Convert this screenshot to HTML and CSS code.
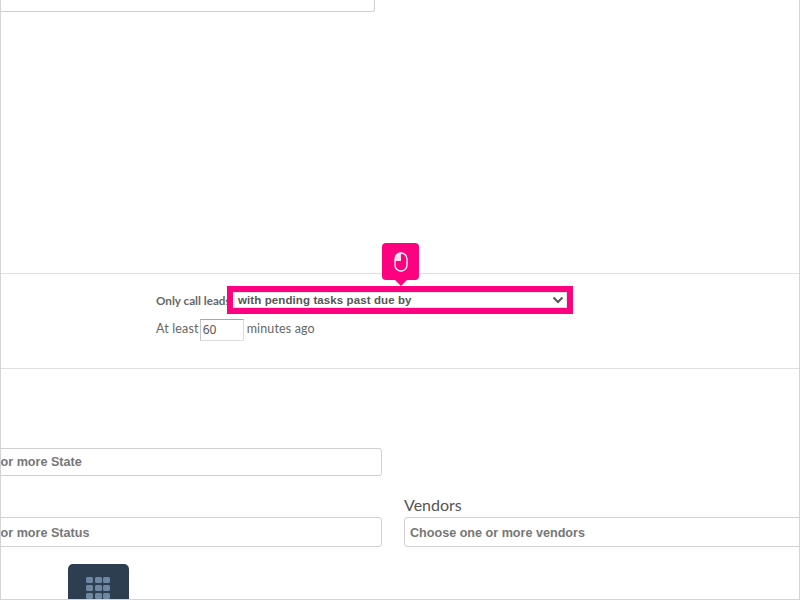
FILE: index.html
```html
<!DOCTYPE html>
<html lang="en">
<head>
<meta charset="utf-8">
<title>Call filters</title>
<link rel="stylesheet" href="styles.css">
</head>
<body>
<div class="frame">
  <section class="top">
    <div class="top-field"></div>
  </section>
  <section class="rules">
    <div class="rule-row">
      <span class="rule-label">Only call leads</span>
      <div class="select">
        <span>with pending tasks past due by</span>
        <svg class="chevron" width="12" height="8" viewBox="0 0 12 8"><path d="M1.5 1.5 6 6l4.5-4.5" fill="none" stroke="#555" stroke-width="2"/></svg>
      </div>
    </div>
    <div class="minutes-row">
      <span>At least</span>
      <div class="minutes-input">60</div>
      <span>minutes ago</span>
    </div>
    <div class="highlight"></div>
    <div class="tip">
      <svg width="14" height="20" viewBox="0 0 14 20">
        <rect x="1" y="1" width="12" height="18" rx="6" fill="none" stroke="#fff" stroke-width="1.3"/>
        <path d="M7 1A6 6 0 0 0 1 7v2h6z" fill="#fff" opacity=".85"/>
      </svg>
    </div>
  </section>
  <section class="filters">
    <div class="filter-grid">
      <div class="field"><div class="multi">Choose one or more State</div></div>
      <div class="field"></div>
      <div class="field"><div class="multi tall">Choose one or more Status</div></div>
      <div class="field vendors">
        <div class="field-label">Vendors</div>
        <div class="multi tall">Choose one or more vendors</div>
      </div>
    </div>
    <div class="app-button">
      <div class="dots">
        <i></i><i></i><i></i><i></i><i></i><i></i><i></i><i></i><i></i>
      </div>
    </div>
  </section>
</div>
</body>
</html>
```
FILE: styles.css
```css
* { box-sizing: border-box; }
html, body { margin: 0; padding: 0; background: #fff; }
.frame {
  width: 800px;
  height: 600px;
  border: 1px solid #d4d4d4;
  border-top: 0;
  overflow: hidden;
  display: flex;
  flex-direction: column;
  position: relative;
}
.top {
  height: 274px;
  flex: none;
  border-bottom: 1px solid #e0e0e0;
}
.top-field {
  width: 374px;
  height: 12px;
  border: 1px solid #d0d0d0;
  border-top: 0;
  border-left: 0;
  border-bottom-right-radius: 3px;
}
.rules {
  height: 95px;
  flex: none;
  border-bottom: 1px solid #e0e0e0;
  padding: 18px 0 0 155px;
  position: relative;
  font-family: Lato, "Noto Sans", sans-serif;
  color: #666;
}
.rule-row { display: flex; align-items: center; height: 16px; }
.rule-label {
  width: 78px;
  flex: none;
  font-size: 11.7px;
  line-height: 15px;
  font-weight: 700;
  white-space: nowrap;
}
.select {
  width: 333px;
  height: 16px;
  display: flex;
  align-items: center;
  justify-content: space-between;
  padding: 0 3px 0 4px;
  font: 700 11.5px/16px "Liberation Sans", Arial, sans-serif;
  letter-spacing: .1px;
  color: #555;
  background: #fff;
  box-shadow: inset 0 0 0 1px #e4e4e4;
}
.minutes-row {
  display: flex;
  align-items: flex-start;
  gap: 3px;
  margin-top: 11px;
  font-size: 12.5px;
  line-height: 20px;
  letter-spacing: .15px;
}
.minutes-input {
  width: 44px;
  height: 22px;
  margin-left: -2px;
  padding-left: 2px;
  font-size: 12px;
  line-height: 20px;
  letter-spacing: 0;
  font-family: "Noto Sans", sans-serif;
  border: 1px solid #dcdcdc;
  border-top-color: #a8a8a8;
  border-left-color: #c4c4c4;
  color: #555;
}
.highlight {
  position: absolute;
  left: 226px;
  top: 12px;
  width: 346px;
  height: 28px;
  border: 6px solid #ff0080;
}
.tip {
  position: absolute;
  left: 381px;
  top: -31px;
  width: 37px;
  height: 37px;
  background: #ff0080;
  border-radius: 4px;
  display: flex;
  align-items: center;
  justify-content: center;
}
.tip::after {
  content: "";
  position: absolute;
  left: 13px;
  bottom: -6px;
  border: 6px solid transparent;
  border-bottom: 0;
  border-top-color: #ff0080;
}
.filters { flex: 1; min-height: 0; }
.filter-grid {
  display: grid;
  grid-template-columns: 463px 1fr;
  grid-template-rows: 28px 71px;
  column-gap: 22px;
  margin: 0 -40px 0 -82px;
  padding-top: 79px;
  height: 178px;
}
.field { display: flex; flex-direction: column; justify-content: flex-end; min-width: 0; }
.field:nth-child(1) { justify-content: flex-start; }
.multi {
  height: 28px;
  flex: none;
  border: 1px solid #d0d0d0;
  border-radius: 3px;
  padding-left: 5px;
  font: 700 12.6px/26px "Liberation Sans", Arial, sans-serif;
  color: #777;
  white-space: nowrap;
}
.multi.tall { height: 30px; line-height: 30px; }
.field-label {
  font: 400 16px/22px Lato, "Noto Sans", sans-serif;
  color: #555;
  margin-bottom: 1px;
}
.app-button {
  width: 61px;
  height: 60px;
  margin: 17px 0 0 67px;
  background: #2c3e50;
  border-radius: 5px;
  padding: 13px 0 0 18px;
}
.dots {
  display: grid;
  grid-template-columns: repeat(3, 7px);
  grid-auto-rows: 6px;
  gap: 2px 1.5px;
}
.dots i { background: #6f87a3; border-radius: 1.5px; }
```
